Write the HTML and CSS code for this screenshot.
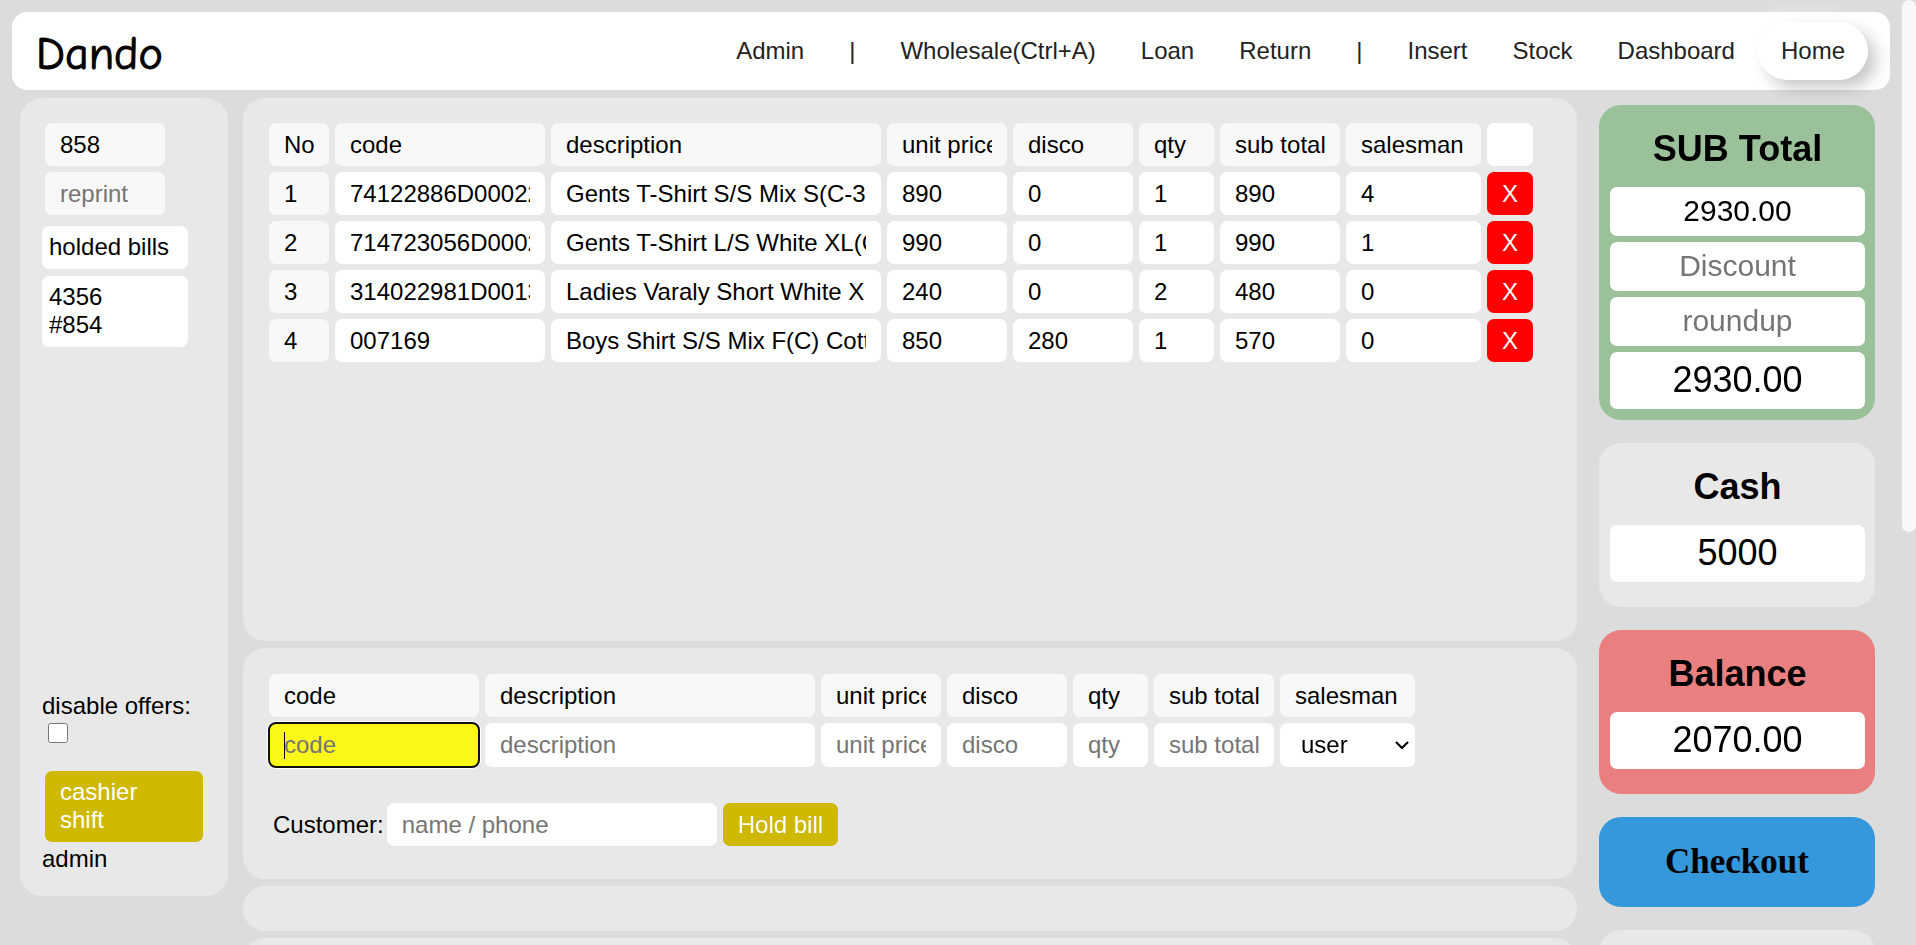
FILE: index.html
```html
<!DOCTYPE html>
<html lang="en">
<head>
<meta charset="utf-8">
<title>Dando</title>
<link rel="stylesheet" href="styles.css">
</head>
<body>
<div class="shell">
  <div class="page">
    <header class="topbar">
      <a class="logo" href="#">Dando</a>
      <nav class="nav">
        <a href="#">Admin</a>
        <span class="sep">|</span>
        <a href="#">Wholesale(Ctrl+A)</a>
        <a href="#">Loan</a>
        <a href="#">Return</a>
        <span class="sep">|</span>
        <a href="#">Insert</a>
        <a href="#">Stock</a>
        <a href="#">Dashboard</a>
        <a class="active" href="#">Home</a>
      </nav>
    </header>

    <div class="workspace">
      <aside class="panel side">
        <div class="side-fields">
          <input class="field muted" type="text" value="858" aria-label="bill number">
          <input class="field muted" type="text" placeholder="reprint" aria-label="reprint">
        </div>
        <div class="held">
          <button class="held-item" type="button">holded bills</button>
          <button class="held-item" type="button">4356<br>#854</button>
        </div>
        <div class="side-bottom">
          <label for="offers">disable offers:</label>
          <input id="offers" class="check" type="checkbox">
          <button class="btn shift" type="button">cashier<br>shift</button>
          <span class="who">admin</span>
        </div>
      </aside>

      <main class="center">
        <section class="panel bill">
          <table class="grid">
            <colgroup><col class="c-no"><col class="c-code"><col class="c-desc"><col class="c-num"><col class="c-num"><col class="c-qty"><col class="c-num"><col class="c-man"><col class="c-x"></colgroup>
            <thead>
              <tr>
                <th><span class="head">No</span></th><th><span class="head">code</span></th><th><span class="head">description</span></th><th><span class="head">unit price</span></th><th><span class="head">disco</span></th><th><span class="head">qty</span></th><th><span class="head">sub total</span></th><th><span class="head">salesman</span></th><th><span class="head blank"></span></th>
              </tr>
            </thead>
            <tbody>
              <tr>
                <td><input class="field muted" value="1" aria-label="No"></td><td><input class="field" value="74122886D00022" aria-label="code"></td><td><input class="field" value="Gents T-Shirt S/S Mix S(C-3" aria-label="description"></td><td><input class="field" value="890" aria-label="unit price"></td><td><input class="field" value="0" aria-label="disco"></td><td><input class="field" value="1" aria-label="qty"></td><td><input class="field" value="890" aria-label="sub total"></td><td><input class="field" value="4" aria-label="salesman"></td><td><button class="remove" type="button">X</button></td>
              </tr>
              <tr>
                <td><input class="field muted" value="2" aria-label="No"></td><td><input class="field" value="714723056D0002" aria-label="code"></td><td><input class="field" value="Gents T-Shirt L/S White XL(C" aria-label="description"></td><td><input class="field" value="990" aria-label="unit price"></td><td><input class="field" value="0" aria-label="disco"></td><td><input class="field" value="1" aria-label="qty"></td><td><input class="field" value="990" aria-label="sub total"></td><td><input class="field" value="1" aria-label="salesman"></td><td><button class="remove" type="button">X</button></td>
              </tr>
              <tr>
                <td><input class="field muted" value="3" aria-label="No"></td><td><input class="field" value="314022981D0013" aria-label="code"></td><td><input class="field" value="Ladies Varaly Short White X" aria-label="description"></td><td><input class="field" value="240" aria-label="unit price"></td><td><input class="field" value="0" aria-label="disco"></td><td><input class="field" value="2" aria-label="qty"></td><td><input class="field" value="480" aria-label="sub total"></td><td><input class="field" value="0" aria-label="salesman"></td><td><button class="remove" type="button">X</button></td>
              </tr>
              <tr>
                <td><input class="field muted" value="4" aria-label="No"></td><td><input class="field" value="007169" aria-label="code"></td><td><input class="field" value="Boys Shirt S/S Mix F(C) Cotton" aria-label="description"></td><td><input class="field" value="850" aria-label="unit price"></td><td><input class="field" value="280" aria-label="disco"></td><td><input class="field" value="1" aria-label="qty"></td><td><input class="field" value="570" aria-label="sub total"></td><td><input class="field" value="0" aria-label="salesman"></td><td><button class="remove" type="button">X</button></td>
              </tr>
            </tbody>
          </table>
        </section>

        <section class="panel entry">
          <table class="grid">
            <colgroup><col class="c-code"><col class="c-desc"><col class="c-num"><col class="c-num"><col class="c-qty"><col class="c-num"><col class="c-man"></colgroup>
            <thead>
              <tr>
                <th><span class="head">code</span></th><th><span class="head">description</span></th><th><span class="head">unit price</span></th><th><span class="head">disco</span></th><th><span class="head">qty</span></th><th><span class="head">sub total</span></th><th><span class="head">salesman</span></th>
              </tr>
            </thead>
            <tbody>
              <tr>
                <td><input class="field" placeholder="code" aria-label="code" autofocus></td><td><input class="field" placeholder="description" aria-label="description"></td><td><input class="field" placeholder="unit price" aria-label="unit price"></td><td><input class="field" placeholder="disco" aria-label="disco"></td><td><input class="field" placeholder="qty" aria-label="qty"></td><td><input class="field" placeholder="sub total" aria-label="sub total"></td>
                <td>
                  <div class="picker">
                    <select class="field" aria-label="salesman"><option>user</option></select>
                    <svg class="chevron" width="16" height="12" viewBox="0 0 16 12" aria-hidden="true"><path d="M2 3l6 6 6-6" fill="none" stroke="#000" stroke-width="2.2"/></svg>
                  </div>
                </td>
              </tr>
            </tbody>
          </table>
          <div class="customer">
            <label for="customer">Customer:</label>
            <input id="customer" class="field" placeholder="name / phone">
            <button class="btn" type="button">Hold bill</button>
          </div>
        </section>

        <section class="panel strip"></section>
        <section class="panel more"></section>
      </main>

      <aside class="totals">
        <section class="card green">
          <h2>SUB Total</h2>
          <input class="amount" value="2930.00" aria-label="sub total">
          <input class="amount" placeholder="Discount" aria-label="Discount">
          <input class="amount" placeholder="roundup" aria-label="roundup">
          <input class="amount big" value="2930.00" aria-label="total">
        </section>
        <section class="card">
          <h2>Cash</h2>
          <input class="amount big" value="5000" aria-label="Cash">
        </section>
        <section class="card red">
          <h2>Balance</h2>
          <input class="amount big" value="2070.00" aria-label="Balance">
        </section>
        <button class="checkout" type="button">Checkout</button>
        <section class="card next"></section>
      </aside>
    </div>
  </div>
  <div class="rail"><div class="thumb"></div></div>
</div>
</body>
</html>
```

FILE: styles.css
```css
* { box-sizing: border-box; }

body {
  margin: 0;
  background: #dcdcdc;
  color: #000;
  font: 24px/28px "Liberation Sans", Arial, sans-serif;
}

input, button, select {
  font: inherit;
  color: inherit;
  border: 0;
  margin: 0;
}

a { color: inherit; text-decoration: none; }

.shell {
  display: flex;
  height: 100vh;
  overflow: hidden;
}

.page { flex: 1; min-width: 0; }

.rail { width: 14px; flex: none; }
.thumb {
  height: 532px;
  background: #f8f8f8;
  border-radius: 8px;
}

/* top bar */
.topbar {
  display: flex;
  justify-content: space-between;
  align-items: center;
  margin: 12px 12px 8px;
  padding: 10px 22px 10px 24px;
  background: #fff;
  border-radius: 15px;
}

.logo {
  padding-top: 8px;
  font-family: "Comic Sans MS", "Comic Neue", Lato, sans-serif;
  font-size: 46px;
  line-height: 50px;
  -webkit-text-stroke: 1px #000;
}

.nav { display: flex; gap: 1px; color: #222; }
.nav a, .sep { padding: 15px 22px; border-radius: 29px; }
.nav .active {
  padding: 15px 23px;
  background: #fff;
  box-shadow: 8px 8px 16px rgba(0, 0, 0, .22), -8px -8px 16px rgba(255, 255, 255, .5);
}

/* three columns */
.workspace {
  display: grid;
  grid-template-columns: 208px minmax(0, 1fr) 276px;
  align-items: start;
  padding: 0 27px 0 20px;
}

.panel { background: #e8e8e8; border-radius: 22px; }

.field, .head {
  display: block;
  width: 100%;
  height: 43px;
  padding: 0 15px;
  background: #fff;
  border-radius: 7px;
}
.field.muted, .head { background: #f8f8f8; }
.field::placeholder, .amount::placeholder { color: #757575; }
.field:focus {
  background: linear-gradient(#000, #000) left center / 1px 27px no-repeat content-box, #fbf719;
  outline: 2px solid #101010;
  outline-offset: -1px;
  box-shadow: 0 0 0 2px #fff;
}

.btn {
  min-height: 43px;
  padding: 7px 15px;
  background: #cfb800;
  color: #fff;
  text-align: left;
  border-radius: 7px;
}

/* left column */
.side {
  display: flex;
  flex-direction: column;
  min-height: 798px;
  padding: 25px 22px 23px;
}
.side-fields {
  display: grid;
  grid-template-columns: 120px;
  gap: 6px;
  padding-left: 3px;
}
.held {
  display: grid;
  grid-template-columns: 146px;
  gap: 7px;
  margin-top: 11px;
}
.held-item {
  padding: 7px 7px 8px;
  background: #fff;
  text-align: left;
  border-radius: 7px;
}
.side-bottom {
  display: flex;
  flex-direction: column;
  align-items: start;
  margin-top: auto;
}
.check { width: 20px; height: 20px; margin: 3px 6px 28px; }
.shift { width: 158px; margin: 0 3px 3px; padding-bottom: 8px; }

/* centre column */
.center {
  display: grid;
  gap: 7px;
  margin: 0 22px 0 15px;
}
.bill { min-height: 543px; padding: 19px 20px; }
.entry { padding: 20px 20px 33px; }
.strip { min-height: 45px; }
.more { min-height: 300px; }

.grid {
  table-layout: fixed;
  width: 0;
  border-spacing: 6px;
}
.grid th, .grid td { padding: 0; }
.c-no { width: 60px; }
.c-code { width: 210px; }
.c-desc { width: 330px; }
.c-num { width: 120px; }
.c-qty { width: 75px; }
.c-man { width: 135px; }
.c-x { width: 46px; }

.head {
  font-weight: 400;
  line-height: 43px;
  text-align: left;
  white-space: nowrap;
  padding: 0;
  border: solid #f8f8f8;
  border-width: 0 15px;
  overflow: hidden;
}
.head.blank { background: #fff; border-color: #fff; }

.remove {
  display: block;
  width: 100%;
  height: 43px;
  padding: 0;
  background: #f00;
  color: #fff;
  border-radius: 7px;
}

.entry .grid td .field { height: 44px; }

.picker { position: relative; }
.picker .field { appearance: none; padding: 0 21px; }
.chevron {
  position: absolute;
  right: 5px;
  top: 16px;
  pointer-events: none;
}

.customer {
  display: flex;
  align-items: center;
  gap: 6px;
  padding: 30px 0 0 10px;
}
.customer label { margin-right: -3px; }
.customer .field { width: 330px; }

/* right column */
.totals {
  display: grid;
  gap: 23px;
  padding-top: 7px;
}
.card {
  display: grid;
  gap: 6px;
  padding: 24px 10px 25px 11px;
  background: #e8e8e8;
  border-radius: 22px;
}
.card h2 {
  margin: 0 0 12px;
  font-size: 36px;
  line-height: 40px;
  text-align: center;
}
.card.green { background: #9bc19b; padding-bottom: 11px; }
.card.red { background: #e9807f; }
.card.next { min-height: 200px; }

.amount {
  width: 100%;
  height: 49px;
  padding: 0 12px 2px;
  background: #fff;
  border-radius: 7px;
  font-size: 30px;
  text-align: center;
}
.amount.big { height: 57px; font-size: 36px; }

.checkout {
  height: 90px;
  background: #3498db;
  border-radius: 22px;
  font: bold 35px "Liberation Serif", Georgia, serif;
}
```
